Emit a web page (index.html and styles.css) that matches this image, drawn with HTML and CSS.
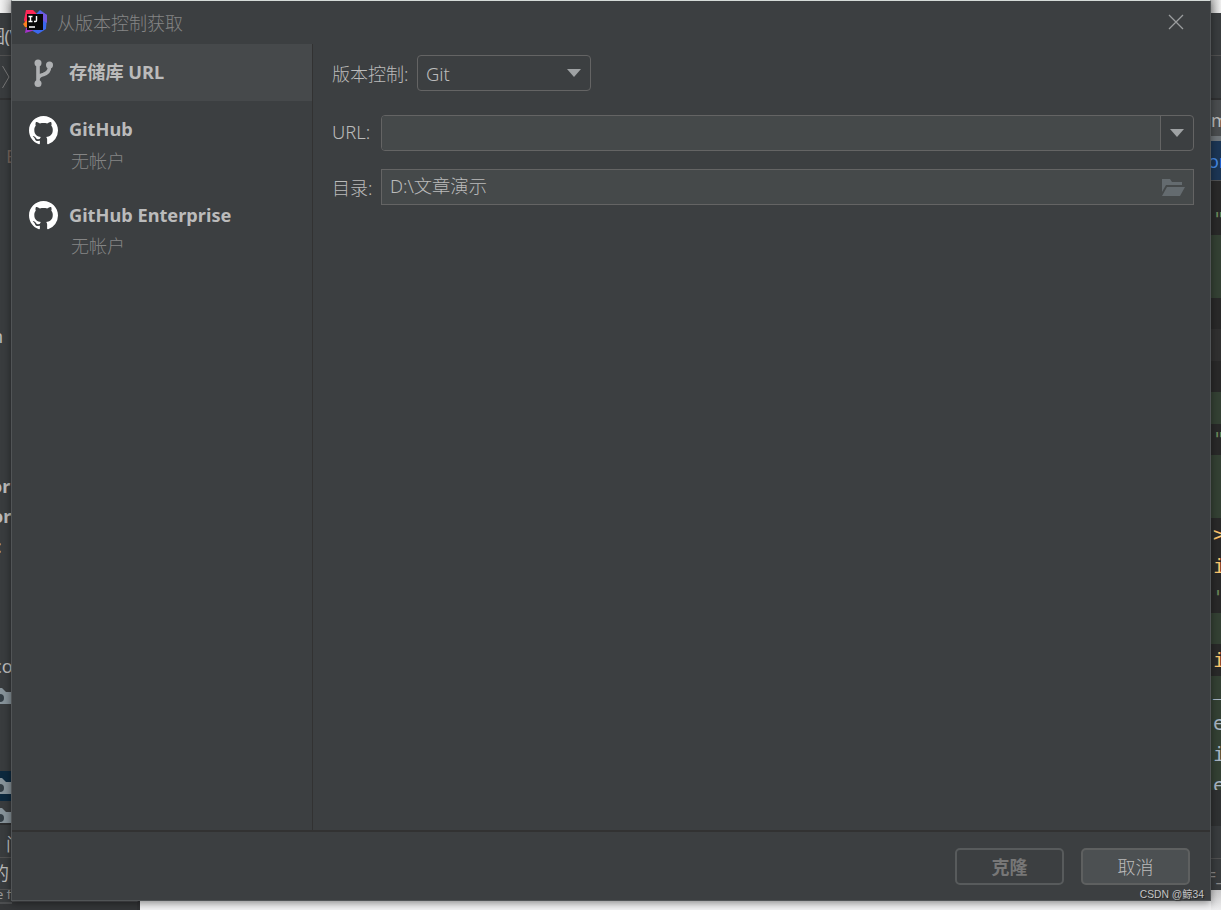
FILE: index.html
```html
<!DOCTYPE html>
<html lang="zh-CN">
<head>
    <meta charset="UTF-8">
    <title>从版本控制获取</title>
    <link rel="stylesheet" href="styles.css">
</head>
<body>
    <svg width="0" height="0" class="defs">
        <symbol id="github" viewBox="0 0 16 16">
            <path fill="#fff" d="M8 0C3.58 0 0 3.58 0 8c0 3.54 2.29 6.53 5.47 7.59.4.07.55-.17.55-.38 0-.19-.01-.82-.01-1.49-2.01.37-2.53-.49-2.69-.94-.09-.23-.48-.94-.82-1.13-.28-.15-.68-.52-.01-.53.63-.01 1.08.58 1.23.82.72 1.21 1.87.87 2.33.66.07-.52.28-.87.51-1.07-1.78-.2-3.64-.89-3.64-3.95 0-.87.31-1.59.82-2.15-.08-.2-.36-1.02.08-2.12 0 0 .67-.21 2.2.82.64-.18 1.32-.27 2-.27s1.36.09 2 .27c1.53-1.04 2.2-.82 2.2-.82.44 1.1.16 1.92.08 2.12.51.56.82 1.27.82 2.15 0 3.07-1.87 3.75-3.65 3.95.29.25.54.73.54 1.48 0 1.07-.01 1.93-.01 2.2 0 .21.15.46.55.38A8.01 8.01 0 0 0 16 8c0-4.42-3.58-8-8-8z"/>
        </symbol>
        <symbol id="folder" viewBox="0 0 12 18">
            <path fill="#87939a" d="M0 1h2l4 4h6v12H0z"/>
            <circle cx="0" cy="11" r="4" fill="#333d44"/>
        </symbol>
    </svg>

    <!-- IDE window behind the dialog -->
    <div class="ide">
        <div class="edge left">
            <div class="desktop"></div>
            <div class="menu"><span>图(V</span></div>
            <div class="nav"><svg width="12" height="43"><path d="M2.500 10l6.500 11-6.500 11" fill="none" stroke="#777" /></svg></div>
            <div class="tree">
                <div class="row warn"><span>E</span></div>
                <div class="row r-n"><span>n</span></div>
                <div class="row r-ori"><span>ori</span></div>
                <div class="row r-or"><span>or</span></div>
                <div class="row r-colon"><span>:</span></div>
                <div class="row r-co"><span>co</span></div>
                <div class="row"><svg width="12" height="18"><use href="#folder"/></svg></div>
                <div class="row r-sel"><svg width="12" height="18"><use href="#folder"/></svg></div>
                <div class="row r-last"><svg width="12" height="18"><use href="#folder"/></svg></div>
            </div>
            <div class="tools"><span>问</span></div>
            <div class="message"><span>的</span></div>
            <div class="status"><span>e f</span></div>
            <div class="taskbar"></div>
        </div>
        <div class="middle">
            <div class="taskbar"></div>
        </div>
        <div class="edge right">
            <div class="desktop"></div>
            <div class="menu"></div>
            <div class="nav"></div>
            <div class="tab"><span>m</span></div>
            <div class="notice"><span>or</span></div>
            <div class="code l1"><i>"</i></div>
            <div class="code added l2"></div>
            <div class="code l1a"></div>
            <div class="code caret"></div>
            <div class="code l1a"></div>
            <div class="code added l1b"></div>
            <div class="code l1a"><i>"</i></div>
            <div class="code added l2"></div>
            <div class="code l3"><b>&gt;</b><b>i</b><i>'</i></div>
            <div class="code added l1a"></div>
            <div class="code l1b"><b>i</b></div>
            <div class="code added l4"><span class="underscore">_</span><span>e</span><span>i</span><span>e</span></div>
            <div class="crumbs"></div>
            <div class="tools"></div>
            <div class="message"><span>=_</span></div>
            <div class="desktop-bottom"></div>
        </div>
    </div>

    <div class="dialog">
        <header class="titlebar">
            <svg class="logo" width="24" height="24" viewBox="0 0 24 24">
                <path d="M3 0h7l4 4-2 12-9-1-2-5z" fill="#fe2857"/>
                <path d="M0 14l4-4 2 8-4-1z" fill="#fc801d"/>
                <path d="M13 4l4-4 7 5-1 14-8 5-7-4z" fill="#3b68ee"/>
                <path d="M17 1l7 4v8l-5-3z" fill="#7358df"/>
                <path d="M3 18l-1 5 7-2 4-3z" fill="#a332c8"/>
                <rect x="4" y="4" width="16" height="16" fill="#080808"/>
                <path d="M5.500 6.500h4M7.500 6.500v5M5.500 11.500h4M13.500 6v4.500q0 1-1 1h-1.500M6 17h6" fill="none" stroke="#fff" stroke-width="1.400"/>
            </svg>
            <span class="title">从版本控制获取</span>
            <svg class="close" width="16" height="16" viewBox="0 0 16 16"><path d="M1 1l14 14M15 1L1 15" stroke="#9b9d9e" stroke-width="1.300"/></svg>
        </header>

        <div class="content">
            <aside class="sidebar">
                <div class="item selected">
                    <svg class="icon" width="30" height="30" viewBox="0 0 30 30">
                        <path d="M10 5v20M21.500 6v3c0 5-3 6.500-6 7.500-3 .8-5.500 1.800-5.500 5" fill="none" stroke="#afb1b3" stroke-width="3.600"/>
                        <circle cx="10" cy="5" r="3.500" fill="#afb1b3"/>
                        <circle cx="21.500" cy="7" r="3.500" fill="#afb1b3"/>
                        <circle cx="10" cy="25.500" r="3.500" fill="#afb1b3"/>
                    </svg>
                    <div class="name">存储库 URL</div>
                </div>
                <div class="item">
                    <svg class="icon github" width="29" height="29"><use href="#github"/></svg>
                    <div class="name">GitHub</div>
                    <div class="account">无帐户</div>
                </div>
                <div class="item">
                    <svg class="icon github" width="29" height="29"><use href="#github"/></svg>
                    <div class="name">GitHub Enterprise</div>
                    <div class="account">无帐户</div>
                </div>
            </aside>

            <main class="form">
                <div class="field">
                    <label>版本控制:</label>
                    <div class="select">
                        <span>Git</span>
                        <svg width="14" height="8"><path d="M0 0h14L7 8z" fill="#9fa2a4"/></svg>
                    </div>
                </div>
                <div class="field url">
                    <label>URL:</label>
                    <div class="combo">
                        <div class="combo-text"></div>
                        <div class="combo-arrow"><svg width="14" height="8"><path d="M0 0h14L7 8z" fill="#9fa2a4"/></svg></div>
                    </div>
                </div>
                <div class="field directory">
                    <label>目录:</label>
                    <div class="input">
                        <span>D:\文章演示</span>
                        <svg width="23" height="17" viewBox="0 0 23 17"><path d="M0 0h8l2 3h10v3H4L0 13zM5 8h18l-5 9H0z" fill="#646b6f"/></svg>
                    </div>
                </div>
            </main>
        </div>

        <footer class="footer">
            <div class="button disabled">克隆</div>
            <div class="button">取消</div>
        </footer>
        <div class="watermark">CSDN @鲸34</div>
    </div>
</body>
</html>
```

FILE: styles.css
```css
* { box-sizing: border-box; }
body { margin: 0; width: 1221px; height: 910px; overflow: hidden; position: relative; background: #f3f3f4; color: #bbbbbb; font: 18px/24px "Noto Sans", "Noto Sans CJK SC", sans-serif; }
svg { display: block; flex: none; }
.defs { position: absolute; }

/* IDE behind */
.ide { display: grid; grid-template-columns: 12px 1199px 10px; height: 910px; }
.edge { display: flex; flex-direction: column; overflow: hidden; background: #393c3e; white-space: nowrap; }
.edge > div { flex: none; overflow: hidden; }
.desktop { height: 13px; background: linear-gradient(to right, #f1f1f1, #cfcfcf); }
.right .desktop { background: linear-gradient(to right, #bdbdbd, #eeeeee); }
.menu { height: 42px; padding-top: 11px; }
.menu span { margin-left: -13px; letter-spacing: -0.5px; }
.nav { height: 45px; border-top: 1px solid #515151; border-bottom: 2px solid #303132; }
.tree { height: 725px; border-bottom: 2px solid #2d2e2f; }
.row { height: 30px; display: flex; align-items: center; }
.row span { margin-left: -8px; }
.warn { margin-top: 41px; color: #75645a; }
.warn span { margin-left: 6px; }
.r-n { margin-top: 150px; }
.r-n span { margin-left: -8px; }
.r-ori { margin-top: 120px; font-weight: bold; }
.r-ori span { margin-left: -9px; }
.r-or { font-weight: bold; }
.r-colon span { margin-left: -3px; }
.r-co { margin-top: 90px; }
.r-co span { margin-left: -7px; }
.r-sel { margin-top: 60px; background: #0d293e; }
.r-last { height: 24px; padding-top: 5px; }
.tools { height: 32px; padding-top: 7px; }
.tools span { margin-left: 6px; }
.message { height: 32px; border-top: 1px solid #515151; padding-top: 3px; }
.message span { margin-left: -9px; }
.right .message span { margin-left: -5px; color: #888888; }
.status { height: 13px; border-top: 1px solid #515151; font-size: 13px; line-height: 8px; color: #999999; }
.status span { margin-left: -4px; }
.taskbar { height: 8px; background: #343638; border-top: 2px solid #4c4e50; }
.middle { display: flex; align-items: flex-end; }
.middle .taskbar { width: 128px; height: 10px; border-right: 3px solid #303234; }

.tab { height: 41px; padding: 8px 0 0; background: #4a4d4f; border-bottom: 5px solid #70767a; }
.notice { height: 40px; background: #1c3655; border-bottom: 1px solid #505254; padding-top: 8px; color: #4589e5; }
.notice span { margin-left: -3px; }
.code { background: #292929; color: #a9b7c6; font: 20px/31px "DejaVu Sans Mono", monospace; padding-left: 3px; }
.code i, .code b, .code span { display: block; font-style: normal; font-weight: normal; }
.code i { color: #6a8759; margin-left: -1px; }
.code b { color: #ffc66d; margin-left: -1px; line-height: 32px; }
.added { background: #344134; }
.l1 { height: 54px; padding-top: 23px; }
.l1a { height: 31px; }
.l1b { height: 32px; }
.l2 { height: 63px; }
.l3 { height: 95px; }
.l3 i { margin-left: -2px; }
.l4 { height: 114px; padding-top: 1px; }
.l4 span { margin-left: -1px; line-height: 31px; }
.l4 .underscore { line-height: 23px; height: 31px; }
.caret { height: 32px; background: #303030; }
.crumbs { height: 36px; background: #2f3132; }
.desktop-bottom { flex: 1 !important; background: linear-gradient(#c8c8c9, #eeeeef); }

/* Dialog */
.dialog { position: absolute; left: 11px; top: 0; width: 1200px; height: 901px; display: flex; flex-direction: column; background: #3c3f41; border: 1px solid #515456; border-top-color: #d5dbd8; box-shadow: 0 2px 8px rgba(0, 0, 0, .45); }
.titlebar { display: flex; align-items: center; height: 43px; padding: 0 26px 2px 11px; }
.title { margin: 2px 0 0 10px; color: #858585; font-weight: 300; }
.close { margin-left: auto; }
.content { display: flex; height: 786px; }
.sidebar { width: 301px; border-right: 1px solid #323232; }
.item { display: grid; grid-template-columns: 30px 1fr; grid-template-rows: 30px 24px; column-gap: 11px; height: 85px; padding: 14px 16px 0; }
.item.selected { height: 57px; background: #46494b; }
.item:last-child { padding-top: 15px; }
.github { margin: 1px 0 0 1px; }
.item:last-child .github { margin-top: 0; }
.name { font-weight: bold; font-size: 18.2px; line-height: 28px; white-space: nowrap; }
.account { grid-column: 2; padding-left: 2px; margin-top: 4px; color: #858585; font-weight: 300; }
.item:last-child .account { margin-top: 3px; }
.form { flex: 1; padding: 11px 16px 0 19px; }
.field { display: flex; align-items: center; height: 36px; }
.field label { width: 49px; padding-top: 2px; font-weight: 300; }
.field:first-child label { width: 85px; white-space: nowrap; }
.url { margin-top: 24px; }
.field.url label { padding: 0 0 2px; font-size: 18.4px; }
.directory { margin-top: 18px; }
.select, .combo, .input { display: flex; align-items: center; height: 36px; border: 1px solid #646464; }
.select { width: 174px; padding: 0 9px 0 8px; justify-content: space-between; border-radius: 4px; }
.select span { padding-top: 2px; font-size: 18.4px; font-weight: 300; }
.combo { flex: 1; border-radius: 4px; overflow: hidden; }
.combo-text { flex: 1; height: 34px; background: #45494a; }
.combo-arrow { display: flex; align-items: center; justify-content: center; width: 33px; height: 34px; border-left: 1px solid #646464; }
.input { flex: 1; justify-content: space-between; padding: 0 8px; background: #45494a; font-weight: 300; }
.input span { padding-bottom: 2px; font-size: 18.3px; }
.footer { display: flex; justify-content: flex-end; gap: 17px; height: 70px; padding: 16px 20px 0; border-top: 2px solid #323232; }
.button { width: 109px; height: 37px; border: 2px solid #5e6060; border-radius: 5px; background: #4c5052; text-align: center; line-height: 35px; font-weight: 300; }
.button.disabled { background: none; border-color: #585b5c; color: #777777; font-weight: bold; }
.watermark { position: absolute; right: 6px; bottom: -3px; font: 10.3px/16px "Liberation Sans", "Noto Sans CJK SC", sans-serif; color: #c4c4c4; text-shadow: 1px 1px 1px #222222; }
```
